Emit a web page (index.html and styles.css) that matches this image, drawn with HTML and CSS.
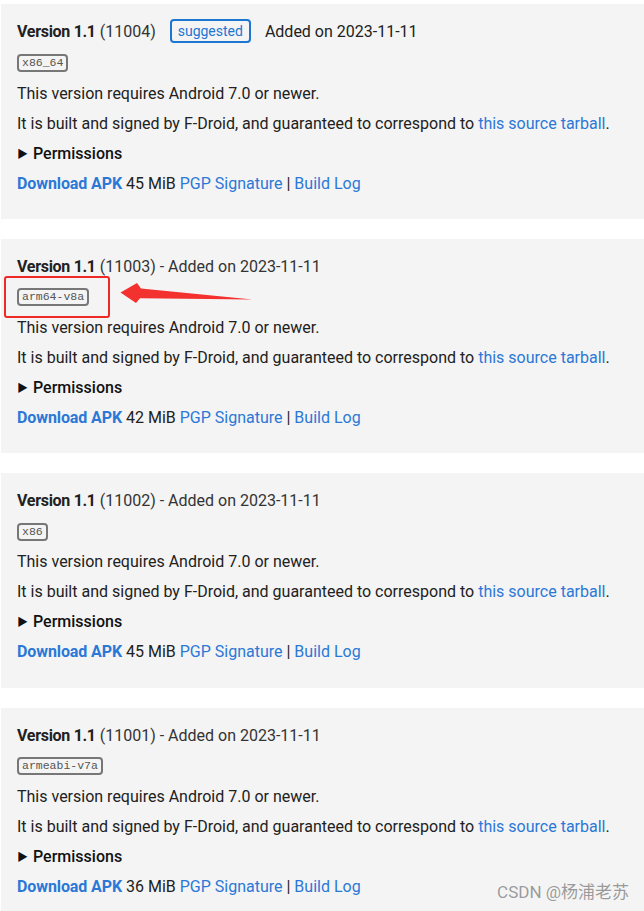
FILE: index.html
```html
<!DOCTYPE html>
<html lang="en">
<head>
    <meta charset="UTF-8">
    <meta name="viewport" content="width=device-width, initial-scale=1.0">
    <title>Packages</title>
    <link rel="stylesheet" href="styles.css">
</head>
<body>
    <div class="package-list">
        <div class="package">
            <div class="package-title">
                <b>Version 1.1</b> (11004)
                <span class="suggested">suggested</span>
                <span class="added">Added on 2023-11-11</span>
            </div>
            <div class="arch-row first"><code class="arch">x86_64</code></div>
            <p>This version requires Android 7.0 or newer.</p>
            <p>It is built and signed by F-Droid, and guaranteed to correspond to <a href="#">this source tarball</a>.</p>
            <details>
                <summary>Permissions</summary>
            </details>
            <p class="downloads"><a href="#" class="apk">Download APK</a> 45 MiB <a href="#">PGP Signature</a> | <a href="#">Build Log</a></p>
        </div>

        <div class="package">
            <div class="package-title"><b>Version 1.1</b> (11003) - Added on 2023-11-11</div>
            <div class="arch-row"><code class="arch">arm64-v8a</code></div>
            <p>This version requires Android 7.0 or newer.</p>
            <p>It is built and signed by F-Droid, and guaranteed to correspond to <a href="#">this source tarball</a>.</p>
            <details>
                <summary>Permissions</summary>
            </details>
            <p class="downloads"><a href="#" class="apk">Download APK</a> 42 MiB <a href="#">PGP Signature</a> | <a href="#">Build Log</a></p>

            <div class="mark-box"></div>
            <svg class="mark-arrow" width="140" height="30" viewBox="118 280 140 30">
                <path d="M120.5 292.5 L137 283 L141 288.5 L252.5 299.6 L140 298.2 L136 303 Z" fill="#f3312f"/>
            </svg>
        </div>

        <div class="package">
            <div class="package-title"><b>Version 1.1</b> (11002) - Added on 2023-11-11</div>
            <div class="arch-row"><code class="arch">x86</code></div>
            <p>This version requires Android 7.0 or newer.</p>
            <p>It is built and signed by F-Droid, and guaranteed to correspond to <a href="#">this source tarball</a>.</p>
            <details>
                <summary>Permissions</summary>
            </details>
            <p class="downloads"><a href="#" class="apk">Download APK</a> 45 MiB <a href="#">PGP Signature</a> | <a href="#">Build Log</a></p>
        </div>

        <div class="package">
            <div class="package-title"><b>Version 1.1</b> (11001) - Added on 2023-11-11</div>
            <div class="arch-row"><code class="arch">armeabi-v7a</code></div>
            <p>This version requires Android 7.0 or newer.</p>
            <p>It is built and signed by F-Droid, and guaranteed to correspond to <a href="#">this source tarball</a>.</p>
            <details>
                <summary>Permissions</summary>
            </details>
            <p class="downloads"><a href="#" class="apk">Download APK</a> 36 MiB <a href="#">PGP Signature</a> | <a href="#">Build Log</a></p>
        </div>
    </div>

    <div class="watermark">CSDN @杨浦老苏</div>
</body>
</html>
```

FILE: styles.css
```css
body {
    margin: 0;
    padding: 0;
    background-color: white;
    font-family: Roboto, "Noto Sans", "Noto Sans CJK SC", sans-serif;
    font-size: 16px;
    color: #212121;
    overflow: hidden;
    height: 911px;
    position: relative;
}
.package-list {
    display: flex;
    flex-direction: column;
    gap: 20px;
    padding: 4px 0 0 1px;
}
.package {
    position: relative;
    background-color: #f4f4f4;
    height: 214.5px;
    box-sizing: border-box;
    padding: 13px 16px 0 16px;
}
.package-title {
    height: 30px;
    line-height: 30px;
    white-space: nowrap;
    color: #333;
}
.package-title b {
    color: #212121;
    font-weight: 700;
    letter-spacing: -0.3px;
}
.suggested {
    display: inline-block;
    margin-left: 10px;
    padding: 0 6px;
    height: 20px;
    line-height: 20px;
    border: 2px solid #1c76d2;
    border-radius: 4px;
    color: #1c76d2;
    font-size: 14px;
    vertical-align: 1px;
}
.added {
    margin-left: 10px;
    color: #212121;
}
.arch-row {
    height: 31px;
    display: flex;
    align-items: center;
}
.arch-row.first {
    height: 32px;
}
.arch {
    display: inline-block;
    font-family: "Liberation Mono", monospace;
    font-size: 11.5px;
    line-height: 14px;
    color: #555;
    padding: 0 3px;
    border: 2px solid #777;
    border-radius: 4px;
}
p {
    margin: 0;
    height: 30px;
    line-height: 30px;
    white-space: nowrap;
}
a {
    color: #2b78d7;
    text-decoration: none;
}
.apk {
    font-weight: 700;
    letter-spacing: -0.1px;
}
details {
    height: 30px;
    line-height: 30px;
}
summary {
    list-style: none;
    font-weight: 500;
    color: #111;
}
summary::-webkit-details-marker {
    display: none;
}
summary::before {
    content: "\25B6";
    display: inline-block;
    font-size: 11px;
    width: 16px;
    vertical-align: 1px;
}
.mark-box {
    position: absolute;
    left: 3px;
    top: 37px;
    width: 106px;
    height: 42px;
    box-sizing: border-box;
    border: 2px solid #ef2a26;
    border-radius: 3px;
}
.mark-arrow {
    position: absolute;
    left: 117px;
    top: 41.5px;
}
.watermark {
    position: absolute;
    right: 15px;
    bottom: 8px;
    font-size: 17px;
    color: #9a9a9a;
    text-shadow: 0 0 1px #fff;
}
```
